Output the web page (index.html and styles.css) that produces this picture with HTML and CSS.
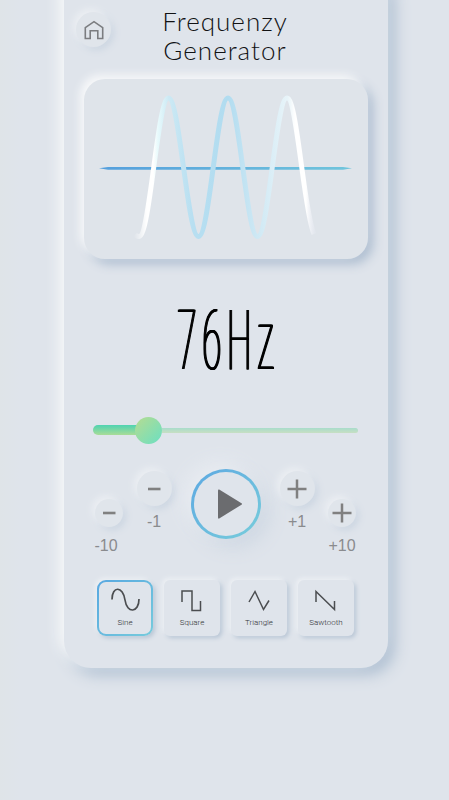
FILE: index.html
```html
<!DOCTYPE html>
<html lang="en">
<head>
<meta charset="utf-8">
<title>Frequenzy Generator</title>
<link rel="stylesheet" href="styles.css">
</head>
<body>
<main class="phone">
  <header class="header">
    <button class="round home" aria-label="Home">
      <svg width="22" height="22" viewBox="0 0 22 22"><path d="M2.3 8.6 11 2.6l8.7 6v10.900h-4.900v-7.800H7.200v7.800H2.300Z" fill="none" stroke="#7b7d80" stroke-width="1.600"/></svg>
    </button>
    <h1 class="title">Frequenzy<br>Generator</h1>
  </header>
  <section class="scope">
    <svg width="284" height="180" viewBox="84 79 284 180">
      <defs>
        <linearGradient id="wave" gradientUnits="userSpaceOnUse" x1="134" y1="0" x2="317" y2="0">
          <stop offset="0" stop-color="#fff" stop-opacity="0"/>
          <stop offset=".07" stop-color="#fff"/>
          <stop offset=".105" stop-color="#fff"/>
          <stop offset=".13" stop-color="#e8fafc"/>
          <stop offset=".19" stop-color="#cce9f4"/>
          <stop offset=".32" stop-color="#b8dff1"/>
          <stop offset=".51" stop-color="#b1dcf0"/>
          <stop offset=".67" stop-color="#cee8f4"/>
          <stop offset=".84" stop-color="#e8f4f9"/>
          <stop offset=".88" stop-color="#fff"/>
          <stop offset=".94" stop-color="#fff"/>
          <stop offset="1" stop-color="#e8eaf5" stop-opacity=".1"/>
        </linearGradient>
        <linearGradient id="axis"><stop stop-color="#559fdd"/><stop offset="1" stop-color="#70c5dc"/></linearGradient>
      </defs>
      <path d="M99 168.300 108 167H343l9 1.300-9 1.400H108Z" fill="url(#axis)"/>
      <path d="M135 234.500C136.500 236.500 138 236.500 139 236.500C150 236.500 157.500 98 168.500 98S187.500 236.500 198.500 236.500S217 98 228 98S246.500 236.500 257.500 236.500S276 98 287 98C297 98 304 213 314 234" fill="none" stroke="url(#wave)" stroke-width="5"/>
    </svg>
  </section>
  <div class="readout"><span class="value">76Hz</span></div>
  <div class="slider"><div class="fill"></div><div class="thumb"></div><div class="rest"></div></div>
  <section class="controls">
    <div class="step outer"><button class="round small"><svg width="20" height="20" viewBox="0 0 20 20"><path d="M4 10h12.500" stroke="#808080" stroke-width="2.600"/></svg></button><span class="label minus-ten">-10</span></div>
    <div class="step inner"><button class="round"><svg width="20" height="20" viewBox="0 0 20 20"><path d="M4 10h12.500" stroke="#808080" stroke-width="2.600"/></svg></button><span class="label">-1</span></div>
    <button class="play" aria-label="Play"><svg width="64" height="64" viewBox="3 3 64 64"><path d="M28.200 20.500 50.500 34.300q1 .7 0 1.400L28.200 49.500q-1.200.5-1.200-1V21.500q0-1.500 1.200-1Z" fill="#6b6c6f"/></svg></button>
    <div class="step inner"><button class="round"><svg width="20" height="20" viewBox="0 0 20 20"><path d="M.5 10h19M10 .5v19" stroke="#808080" stroke-width="2.500"/></svg></button><span class="label">+1</span></div>
    <div class="step outer"><button class="round small"><svg width="20" height="20" viewBox="0 0 20 20"><path d="M.5 10h19M10 .5v19" stroke="#808080" stroke-width="2.500"/></svg></button><span class="label">+10</span></div>
  </section>
  <nav class="waves">
    <button class="wave active"><svg width="30" height="26" viewBox="0 0 30 26"><path d="M2 12.500C2-1.500 13-1 15 13C17 27 29 26 29 12" fill="none" stroke="#4b4d50" stroke-width="1.700"/></svg><span>Sine</span></button>
    <button class="wave"><svg width="30" height="26" viewBox="0 0 30 26"><path d="M5 15V4h10v19.500h8.500V14" fill="none" stroke="#4b4d50" stroke-width="1.500"/></svg><span>Square</span></button>
    <button class="wave"><svg width="30" height="26" viewBox="0 0 30 26"><path d="m5 15 6-10.500 8.500 18L25 13.500" fill="none" stroke="#4b4d50" stroke-width="1.500"/></svg><span>Triangle</span></button>
    <button class="wave"><svg width="30" height="26" viewBox="0 0 30 26"><path d="M5 15V4.500l18.500 18V14" fill="none" stroke="#4b4d50" stroke-width="1.500"/></svg><span>Sawtooth</span></button>
  </nav>
</main>
</body>
</html>
```
FILE: styles.css
```css
* { box-sizing: border-box; }
html { background: #dfe4eb; }
body { margin: 0; height: 800px; overflow: hidden; background: linear-gradient(90deg, #dfe4e8, #dfe4eb 20px); }
button { border: 0; padding: 0; background: #dfe4eb; font: inherit; }
svg { display: block; }
.phone {
  width: 324px; height: 698px; margin: -30px 0 0 64px; padding: 30px 20px 0;
  border-radius: 27px; background: #dfe4eb;
  box-shadow: -5px -5px 14px #fafbfb, 6px 6px 16px #a9bbcf;
}
.header { display: flex; height: 79px; }
.round {
  width: 35px; height: 35px; border-radius: 50%; background: #e0e5eb;
  display: grid; place-items: center; flex: none;
  box-shadow: -3px -3px 7px #eceff3, 3px 3px 7px #cbd5e1;
}
.home { margin: 12px 0 0 -8px; }
.title {
  margin: 7px 0 0 49px; width: 130px; text-align: center;
  font: 300 26px/29px Lato, sans-serif; letter-spacing: 1px; color: #111214; white-space: nowrap;
}
.scope {
  height: 180px; border-radius: 21px; background: #dfe4ea;
  box-shadow: -4px -4px 9px #f8f9fa, 5px 5px 11px #adbdd0;
}
.readout { height: 145px; margin-top: 10px; display: flex; justify-content: center; align-items: center; }
.value {
  font: 100 84px/84px Roboto, sans-serif; letter-spacing: 13px;
  color: #000; transform: translate(2px, -1px) scaleX(.42);
  text-shadow: 1px 0 #000, 2px 0 #000, 3px 0 #000, 4px 0 #000;
}
.slider { height: 30px; margin: 1px 10px 0 9px; display: flex; align-items: center; }
.fill { width: 44px; height: 10px; border-radius: 5px 0 0 5px; background: linear-gradient(#4fd3b1, #a9dc97); }
.thumb { width: 27px; height: 27px; margin-left: -2px; border-radius: 50%; background: linear-gradient(135deg, #b6dc91, #6bdfc2); }
.rest { flex: 1; height: 5px; border-radius: 0 4px 4px 0; background: linear-gradient(#a9dccb, #c7dfc3); }
.controls { display: flex; margin-top: 25px; height: 110px; padding: 0 8px 0 7px; }
.step { display: flex; flex-direction: column; align-items: center; width: 36px; }
.small { width: 28px; height: 28px; }
.outer { padding-top: 29px; }
.outer:last-child { margin-left: 9px; }
.inner { padding-top: 1px; margin-left: 9px; }
.label { margin-top: 7px; font: 16px/18px "Liberation Sans", sans-serif; color: #8a8b8e; white-space: nowrap; }
.outer .label { margin-top: 10px; }
.minus-ten { transform: translateX(-3px); }
.play {
  width: 70px; height: 70px; margin: -1px 0 0 19px; border-radius: 50%; display: grid; place-items: center;
  border: 3px solid transparent; flex: none;
  background: linear-gradient(#dfe4eb, #dfe4eb) padding-box, linear-gradient(135deg, #5ca8e2, #78cddb) border-box;
  box-shadow: -6px -6px 20px #eaedf2, 7px 7px 20px #cbd5e1;
}
.play + .inner { margin-left: 18px; }
.waves { display: flex; gap: 11px; padding-left: 13px; }
.wave {
  width: 56px; height: 56px; border-radius: 6px; padding-top: 7px;
  display: flex; flex-direction: column; align-items: center;
  font: 300 8px/10px Roboto, sans-serif; color: #303234; white-space: nowrap;
  box-shadow: -2px -2px 4px #edf0f4, 2px 2px 4px #b6c4d4;
}
.wave span { margin-top: 5px; }
.active {
  border: 2px solid transparent; padding-top: 5px; border-radius: 9px;
  background: linear-gradient(#dfe4eb, #dfe4eb) padding-box, linear-gradient(135deg, #58a8e1, #76cbdc) border-box;
}
```
